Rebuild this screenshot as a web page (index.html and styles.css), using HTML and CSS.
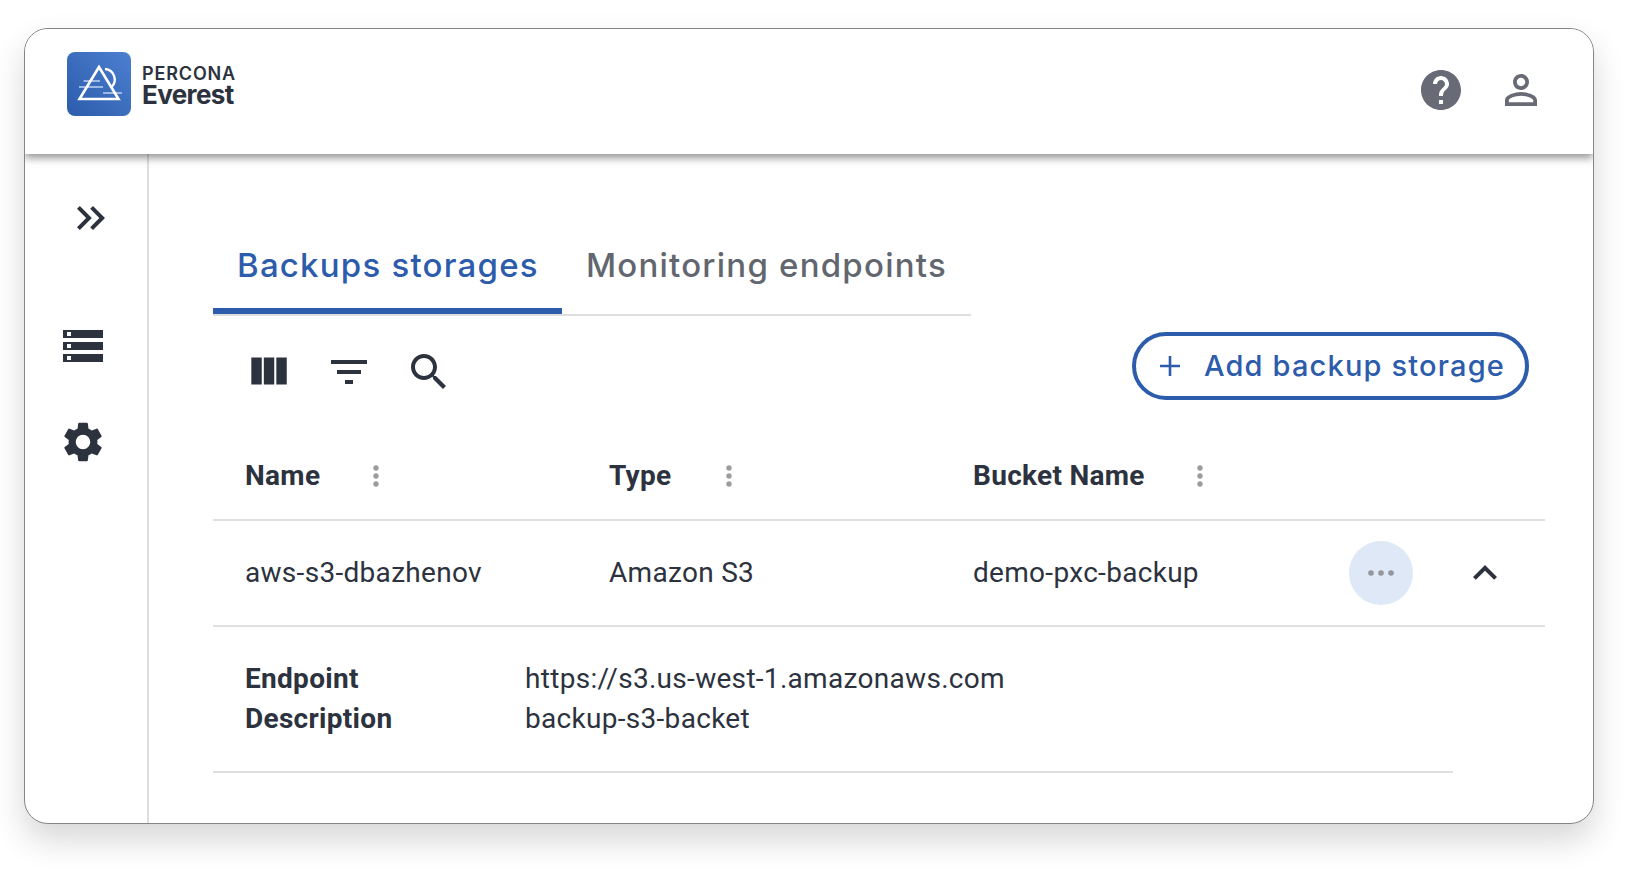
FILE: index.html
```html
<!DOCTYPE html>
<html>
  <head>
    <meta charset="utf-8" />
    <title>Percona Everest</title>
    <link rel="stylesheet" href="styles.css">
  </head>
  <body>
    <div class="card">
      <header class="topbar">
        <div class="brand">
          <svg class="logo" viewBox="0 0 64 64">
            <defs>
              <linearGradient id="logoFill" x1="0" y1="1" x2="1" y2="0">
                <stop offset="0" stop-color="#2c5cab" />
                <stop offset="1" stop-color="#4c7fd0" />
              </linearGradient>
            </defs>
            <rect width="64" height="64" rx="8" fill="url(#logoFill)" />
            <path d="M16.5 29H33M12 35H36M36 41H55" stroke="#9db8e4" stroke-width="2" fill="none" />
            <path d="M38 17A10.5 10.5 0 0 1 44.5 35" stroke="#fff" stroke-width="2.4" fill="none" />
            <path d="M32 15L12.5 47H51.5Z" stroke="#fff" stroke-width="2.6" fill="none" />
          </svg>
          <div class="brand-text">
            <div class="brand-top">PERCONA</div>
            <div class="brand-name">Everest</div>
          </div>
        </div>
        <div class="top-icons">
          <svg class="icon grey" viewBox="0 0 24 24"><path d="M12 2C6.48 2 2 6.48 2 12s4.48 10 10 10 10-4.48 10-10S17.52 2 12 2zm1 17h-2v-2h2v2zm2.07-7.75l-.9.92C13.45 12.9 13 13.5 13 15h-2v-.5c0-1.1.45-2.1 1.17-2.83l1.24-1.26c.37-.36.59-.86.59-1.41 0-1.1-.9-2-2-2s-2 .9-2 2H8c0-2.21 1.79-4 4-4s4 1.79 4 4c0 .88-.36 1.68-.93 2.25z" /></svg>
          <svg class="icon grey" viewBox="0 0 24 24"><path d="M12 5.9c1.16 0 2.1.94 2.1 2.1s-.94 2.1-2.1 2.1S9.9 9.16 9.9 8s.94-2.1 2.1-2.1m0 9c2.97 0 6.1 1.46 6.1 2.1v1.1H5.9V17c0-.64 3.13-2.1 6.1-2.1M12 4C9.79 4 8 5.79 8 8s1.79 4 4 4 4-1.79 4-4-1.79-4-4-4zm0 9c-2.67 0-8 1.34-8 4v3h16v-3c0-2.66-5.33-4-8-4z" /></svg>
        </div>
      </header>

      <div class="body-row">
        <nav class="sidebar">
          <svg class="icon expand" viewBox="0 0 24 24"><path d="M6.41 6 5 7.41 9.58 12 5 16.59 6.41 18l6-6z" /><path d="M13 6l-1.41 1.41L16.17 12l-4.58 4.59L13 18l6-6z" /></svg>
          <svg class="icon" viewBox="0 0 24 24"><path d="M2 20h20v-4H2v4zm2-3h2v2H4v-2zM2 4v4h20V4H2zm4 3H4V5h2v2zm-4 7h20v-4H2v4zm2-3h2v2H4v-2z" /></svg>
          <svg class="icon" viewBox="0 0 24 24"><path d="M19.14,12.94c0.04-0.3,0.06-0.61,0.06-0.94c0-0.32-0.02-0.64-0.07-0.94l2.03-1.58c0.18-0.14,0.23-0.41,0.12-0.61 l-1.92-3.32c-0.12-0.22-0.37-0.29-0.59-0.22l-2.39,0.96c-0.5-0.38-1.03-0.7-1.62-0.94L14.4,2.81c-0.04-0.24-0.24-0.41-0.48-0.41 h-3.84c-0.24,0-0.43,0.17-0.47,0.41L9.25,5.35C8.66,5.59,8.12,5.92,7.63,6.29L5.24,5.33c-0.22-0.08-0.47,0-0.59,0.22L2.74,8.87 C2.62,9.08,2.66,9.34,2.86,9.48l2.03,1.58C4.84,11.36,4.8,11.69,4.8,12s0.02,0.64,0.07,0.94l-2.03,1.58 c-0.18,0.14-0.23,0.41-0.12,0.61l1.92,3.32c0.12,0.22,0.37,0.29,0.59,0.22l2.39-0.96c0.5,0.38,1.03,0.7,1.62,0.94l0.36,2.54 c0.05,0.24,0.24,0.41,0.48,0.41h3.84c0.24,0,0.44-0.17,0.47-0.41l0.36-2.54c0.59-0.24,1.13-0.56,1.62-0.94l2.39,0.96 c0.22,0.08,0.47,0,0.59-0.22l1.92-3.32c0.12-0.22,0.07-0.47-0.12-0.61L19.14,12.94z M12,15.6c-1.98,0-3.6-1.62-3.6-3.6 s1.62-3.6,3.6-3.6s3.6,1.62,3.6,3.6S13.98,15.6,12,15.6z" /></svg>
        </nav>

        <main class="content">
          <div class="tabs">
            <div class="tab active">Backups storages</div>
            <div class="tab">Monitoring endpoints</div>
          </div>

          <div class="toolbar">
            <div class="tools">
              <svg class="icon columns" viewBox="0 0 24 24"><path d="M10 18h5V5h-5v13zm-6 0h5V5H4v13zM16 5v13h5V5h-5z" /></svg>
              <svg class="icon" viewBox="0 0 24 24"><path d="M10 18h4v-2h-4v2zM3 6v2h18V6H3zm3 7h12v-2H6v2z" /></svg>
              <svg class="icon" viewBox="0 0 24 24"><path d="M15.5 14h-.79l-.28-.27C15.41 12.59 16 11.11 16 9.5 16 5.91 13.09 3 9.5 3S3 5.91 3 9.5 5.91 16 9.5 16c1.61 0 3.09-.59 4.23-1.57l.27.28v.79l5 4.99L20.49 19l-4.99-5zm-6 0C7.01 14 5 11.99 5 9.5S7.01 5 9.5 5 14 7.01 14 9.5 11.99 14 9.5 14z" /></svg>
            </div>
            <button class="add-btn">
              <svg class="plus" viewBox="0 0 22 22"><path d="M11 1V21M1 11H21" stroke="#2c5cab" stroke-width="2.6" fill="none" /></svg>
              <span class="add-label">Add backup storage</span>
            </button>
          </div>

          <div class="row head">
            <div class="cell cell-name">Name <svg class="kebab" viewBox="0 0 8 24"><circle cx="4" cy="4" r="2.7" /><circle cx="4" cy="12" r="2.7" /><circle cx="4" cy="20" r="2.7" /></svg></div>
            <div class="cell cell-type">Type <svg class="kebab" viewBox="0 0 8 24"><circle cx="4" cy="4" r="2.7" /><circle cx="4" cy="12" r="2.7" /><circle cx="4" cy="20" r="2.7" /></svg></div>
            <div class="cell cell-bucket">Bucket Name <svg class="kebab" viewBox="0 0 8 24"><circle cx="4" cy="4" r="2.7" /><circle cx="4" cy="12" r="2.7" /><circle cx="4" cy="20" r="2.7" /></svg></div>
          </div>

          <div class="row data">
            <div class="cell cell-name">aws-s3-dbazhenov</div>
            <div class="cell cell-type">Amazon S3</div>
            <div class="cell cell-bucket">demo-pxc-backup</div>
            <div class="more">
              <svg class="more-dots" viewBox="0 0 26 6"><circle cx="3" cy="3" r="2.8" /><circle cx="13" cy="3" r="2.8" /><circle cx="23" cy="3" r="2.8" /></svg>
            </div>
            <svg class="icon collapse" viewBox="0 0 24 24"><path d="M12 8l-6 6 1.41 1.41L12 10.83l4.59 4.58L18 14z" /></svg>
          </div>

          <div class="details">
            <div class="detail-line"><b>Endpoint</b><span>https://s3.us-west-1.amazonaws.com</span></div>
            <div class="detail-line"><b>Description</b><span>backup-s3-backet</span></div>
          </div>
        </main>
      </div>
    </div>
  </body>
</html>
```

FILE: styles.css
```css
* { box-sizing: border-box; }
html, body { height: 100%; }
body {
  margin: 0;
  padding: 28px 0 0 24px;
  background: #fff;
  color: #2c323e;
  font-family: "Roboto", sans-serif;
  overflow: hidden;
}
.card {
  width: 1570px;
  height: 796px;
  display: flex;
  flex-direction: column;
  background: #fff;
  border: 1px solid #858585;
  border-radius: 24px;
  box-shadow: 0 16px 32px rgba(0, 0, 0, 0.16);
  overflow: hidden;
}
.icon {
  width: 48px;
  height: 48px;
  fill: #2c323e;
  flex: none;
}
.icon.grey { fill: #686b75; }

/* top bar */
.topbar {
  height: 125px;
  flex: none;
  display: flex;
  align-items: flex-start;
  justify-content: space-between;
  padding: 23px 48px 0 42px;
  box-shadow: 0 4px 8px rgba(0, 0, 0, 0.42);
  position: relative;
  background: #fff;
}
.brand { display: flex; align-items: center; gap: 11px; }
.logo { width: 64px; height: 64px; display: block; }
.brand-text { margin-top: 3px; }
.brand-top {
  font-family: "Inter", sans-serif;
  font-weight: 600;
  font-size: 18px;
  line-height: 18px;
  letter-spacing: 0.85px;
}
.brand-name {
  font-family: "Inter", sans-serif;
  font-weight: 700;
  font-size: 26px;
  line-height: 24px;
  letter-spacing: -0.6px;
}
.top-icons { display: flex; gap: 32px; margin-top: 14px; }

/* sidebar */
.body-row { flex: 1; display: flex; min-height: 0; }
.sidebar {
  width: 124px;
  flex: none;
  border-right: 2px solid #dedede;
  padding: 40px 0 0 34px;
  display: flex;
  flex-direction: column;
  gap: 48px;
}
.sidebar .expand { margin: 0 0 32px 8px; }

/* content */
.content { flex: 1; padding-left: 64px; padding-right: 48px; }
.tabs {
  width: 758px;
  height: 98px;
  margin-top: 64px;
  display: flex;
  border-bottom: 2px solid #dedede;
}
.tab {
  height: 96px;
  padding: 0 24px 2px;
  display: flex;
  align-items: center;
  flex: none;
  white-space: nowrap;
  font-family: "Inter", sans-serif;
  font-weight: 500;
  font-size: 33px;
  letter-spacing: 1.22px;
  color: #62666f;
}
.tab.active {
  width: 349px;
  color: #2c5cab;
  border-bottom: 6px solid #2c5cab;
  padding-top: 4px;
  padding-bottom: 0;
}
.toolbar {
  display: flex;
  justify-content: space-between;
  padding: 16px 16px 0 31px;
  height: 117px;
}
.tools { display: flex; gap: 32px; margin-top: 16px; padding-left: 1px; }
.tools .columns { width: 50px; height: 50px; margin: -1px 0 0 -2px; }
.add-btn {
  width: 397px;
  height: 68px;
  border: 4px solid #2c5cab;
  border-radius: 34px;
  background: #fff;
  color: #2c5cab;
  font-family: "Inter", sans-serif;
  font-weight: 500;
  font-size: 29px;
  letter-spacing: 1.17px;
  display: flex;
  align-items: center;
  gap: 23px;
  padding: 0 0 0 23px;
}
.add-label { margin-bottom: 2px; }
.plus { width: 22px; height: 22px; flex: none; }

/* table */
.row {
  display: flex;
  align-items: center;
  padding-left: 32px;
  border-bottom: 2px solid #e0e0e0;
  font-size: 28px;
  letter-spacing: 0.3px;
}
.row.head { height: 88px; font-weight: 700; padding-bottom: 2px; }
.row.data { height: 106px; padding-bottom: 2px; }
.cell { display: flex; align-items: center; flex: none; }
.cell-name { width: 364px; }
.cell-type { width: 364px; }
.cell-bucket { width: 376px; }
.kebab { width: 8px; height: 24px; fill: #9c9c9c; margin: 2px 0 0 52px; }
.cell-type .kebab { margin-left: 54px; }
.cell-bucket .kebab { margin-left: 51px; }
.more {
  width: 64px;
  height: 64px;
  border-radius: 50%;
  background: #dfe8f7;
  display: flex;
  align-items: center;
  justify-content: center;
  flex: none;
  margin-top: 2px;
}
.more-dots { width: 26px; height: 6px; fill: #94969c; }
.collapse { margin: 2px 0 0 48px; }
.details {
  width: 1240px;
  padding: 32px 0 32px 32px;
  border-bottom: 2px solid #e0e0e0;
  font-size: 28px;
  line-height: 40px;
  letter-spacing: 0.3px;
}
.detail-line { display: flex; }
.detail-line b { width: 280px; flex: none; }
```
